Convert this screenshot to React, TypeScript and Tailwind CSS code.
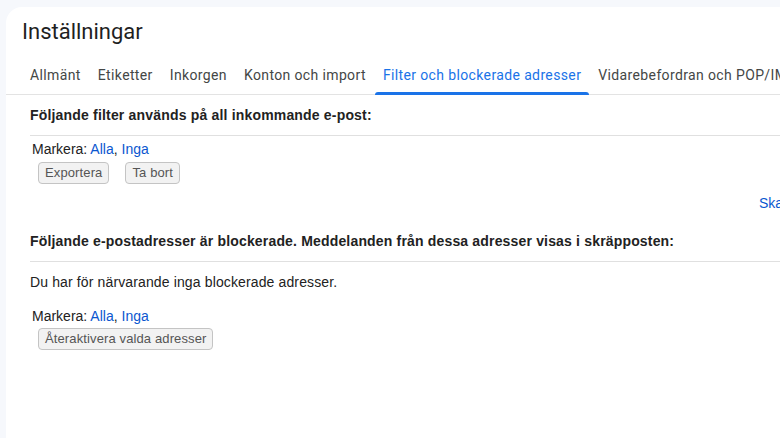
const tabs = [
  "Allmänt",
  "Etiketter",
  "Inkorgen",
  "Konton och import",
  "Filter och blockerade adresser",
  "Vidarebefordran och POP/IMAP",
  "Tillägg",
];

function Markera() {
  return (
    <div className="pl-[2px] text-[14px] leading-5 text-[#222]">
      Markera: <a className="text-[#0b57d0] cursor-pointer">Alla</a>,{" "}
      <a className="text-[#0b57d0] cursor-pointer">Inga</a>
    </div>
  );
}

function Btn({ children }: { children: React.ReactNode }) {
  return (
    <button className="h-[22px] rounded-[4px] border border-[#c4c4c4] bg-[#f2f2f2] px-[6px] text-[13px] leading-5 tracking-[0.12px] text-[#555]">
      {children}
    </button>
  );
}

export default function App() {
  return (
    <div
      className="h-[438px] w-[780px] overflow-hidden bg-[#f6f8fc] pl-[6px] pt-[7px]"
      style={{ fontFamily: '"Liberation Sans", Arial, sans-serif' }}
    >
      <div className="min-h-[431px] w-[920px] rounded-tl-2xl bg-white">
        {/* header */}
        <h1 className="pl-4 pt-[11px] font-['Roboto',sans-serif] text-[22px] leading-[28px] text-[#1f1f1f]">
          Inställningar
        </h1>

        {/* tabs */}
        <div className="mt-[9px] flex border-b border-[#e3e3e3] pl-4 font-['Roboto',sans-serif] text-[14px] leading-5 tracking-[0.37px]">
          {tabs.map((t) => {
            const active = t === "Filter och blockerade adresser";
            return (
              <div
                key={t}
                className={
                  "relative mr-px h-[39px] whitespace-nowrap px-2 pt-[10px] " +
                  (active ? "text-[#1a73e8]" : "text-[#444746]")
                }
              >
                {t}
                {active && (
                  <span className="absolute bottom-[-1px] left-0 right-0 h-[3px] rounded-t-[3px] bg-[#1a73e8]" />
                )}
              </div>
            );
          })}
        </div>

        <div className="px-6">
          {/* filters */}
          <div className="border-b border-[#e0e0e0] pb-[10px] pt-[10px] text-[14px] font-bold leading-5 tracking-[0.18px] text-[#222]">
            Följande filter används på all inkommande e-post:
          </div>
          <div className="mt-[3px]">
            <Markera />
          </div>
          <div className="mt-[3px] flex gap-4 pl-2">
            <Btn>Exportera</Btn>
            <Btn>Ta bort</Btn>
          </div>
          <div className="ml-[729px] mt-[9px] whitespace-nowrap text-[14px] leading-5 text-[#0b57d0]">
            Skapa ett nytt filter&nbsp;&nbsp;Importera filter
          </div>

          {/* blocked */}
          <div className="mt-[18px] whitespace-nowrap border-b border-[#e0e0e0] pb-[10px] text-[14px] font-bold leading-5 tracking-[0.17px] text-[#222]">
            Följande e-postadresser är blockerade. Meddelanden från dessa adresser visas i skräpposten:
          </div>
          <div className="mt-[10px] text-[14px] leading-5 tracking-[0.13px] text-[#222]">
            Du har för närvarande inga blockerade adresser.
          </div>
          <div className="mt-[14px]">
            <Markera />
          </div>
          <div className="mt-[2px] flex pl-2">
            <Btn>Återaktivera valda adresser</Btn>
          </div>
        </div>
      </div>
    </div>
  );
}
